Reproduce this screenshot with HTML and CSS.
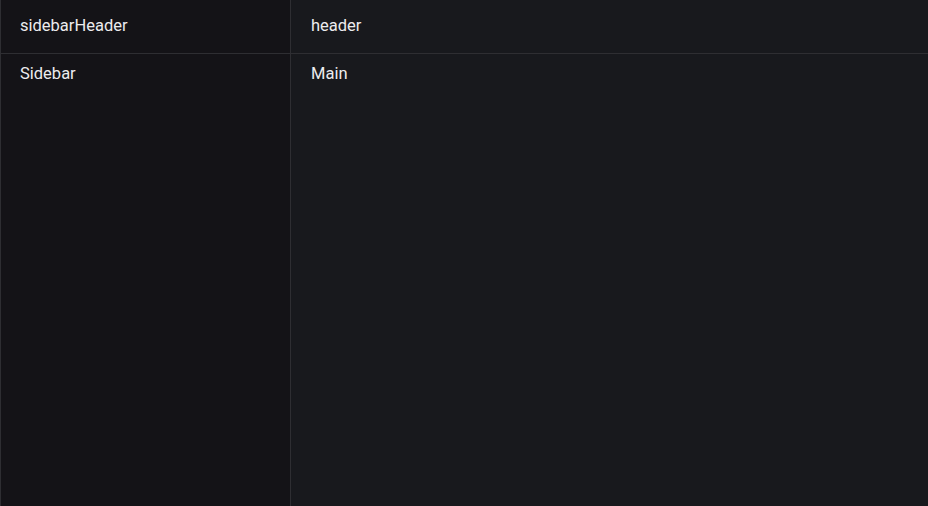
FILE: index.html
```html
<!DOCTYPE html>
<html>
<head>
<meta charset="utf-8">
<link rel="stylesheet" href="styles.css">
</head>
<body>
<div class="layout">
  <div class="sidebar-header cell">sidebarHeader</div>
  <div class="header cell">header</div>
  <div class="sidebar cell">Sidebar</div>
  <div class="main cell">Main</div>
</div>
</body>
</html>
```

FILE: styles.css
```css
html, body {
  margin: 0;
  height: 100%;
  background: #18191d;
}
body {
  font-family: Roboto, "Noto Sans", sans-serif;
  font-size: 16.5px;
  color: #ececee;
}
.layout {
  display: grid;
  grid-template-columns: 290px 1fr;
  grid-template-rows: 54px 1fr;
  height: 100%;
  border-left: 1px solid #2e2e32;
  box-sizing: border-box;
}
.cell {
  padding: 16px 20px 0 19px;
  line-height: 20px;
}
.sidebar-header {
  background: #141317;
  border-right: 1px solid #2e2e32;
  border-bottom: 1px solid #2e2e32;
}
.header {
  background: #18191d;
  border-bottom: 1px solid #2e2e32;
  padding-left: 20px;
}
.sidebar {
  background: #141317;
  border-right: 1px solid #2e2e32;
  padding-top: 10px;
}
.main {
  background: #18191d;
  padding-top: 10px;
  padding-left: 20px;
}
```
